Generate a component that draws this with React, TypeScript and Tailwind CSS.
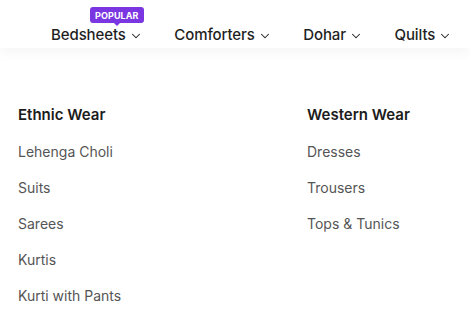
import { ChevronDown } from 'lucide-react';

const navItems = [
  { label: 'Bedsheets', badge: 'POPULAR' },
  { label: 'Comforters' },
  { label: 'Dohar' },
  { label: 'Quilts' },
];

const columns = [
  {
    title: 'Ethnic Wear',
    links: ['Lehenga Choli', 'Suits', 'Sarees', 'Kurtis', 'Kurti with Pants'],
  },
  {
    title: 'Western Wear',
    links: ['Dresses', 'Trousers', 'Tops & Tunics'],
  },
];

export default function App() {
  return (
    <div className="w-[470px] h-[317px] overflow-hidden bg-white font-['Inter',sans-serif] text-[#1f1f1f]">
      {/* Top category nav */}
      <div className="h-[48px] flex items-end pb-[3px] pl-[51px] gap-[31.5px] shadow-[0_6px_10px_rgba(0,0,0,0.035)] relative">
        {navItems.map((item) => (
          <div key={item.label} className="relative flex items-center gap-[3px] whitespace-nowrap">
            {item.badge && (
              <span className="absolute -top-[18px] left-[39px] bg-[#7a36e0] text-white text-[9px] font-bold leading-none px-[5px] pt-[3.5px] pb-[3px] rounded-[3px] tracking-[0.1px]">
                {item.badge}
                <span className="absolute left-1/2 -bottom-[3px] -translate-x-1/2 w-0 h-0 border-l-[3px] border-r-[3px] border-t-[3px] border-l-transparent border-r-transparent border-t-[#7a36e0]" />
              </span>
            )}
            <span className="text-[15px] font-medium leading-[20px] tracking-[-0.1px]">{item.label}</span>
            <ChevronDown size={14} strokeWidth={1.8} className="mt-[1px]" />
          </div>
        ))}
      </div>

      {/* Mega menu columns */}
      <div className="flex pl-[18px] pt-[57px]">
        {columns.map((col) => (
          <div key={col.title} className="w-[289px] shrink-0 flex flex-col">
            <div className="text-[15px] font-semibold leading-[20px] text-[#1c1c1c]">{col.title}</div>
            <ul className="mt-[17px] flex flex-col gap-[16px]">
              {col.links.map((link) => (
                <li key={link} className="text-[14px] leading-[20px] text-[#555]">
                  {link}
                </li>
              ))}
            </ul>
          </div>
        ))}
      </div>
    </div>
  );
}
